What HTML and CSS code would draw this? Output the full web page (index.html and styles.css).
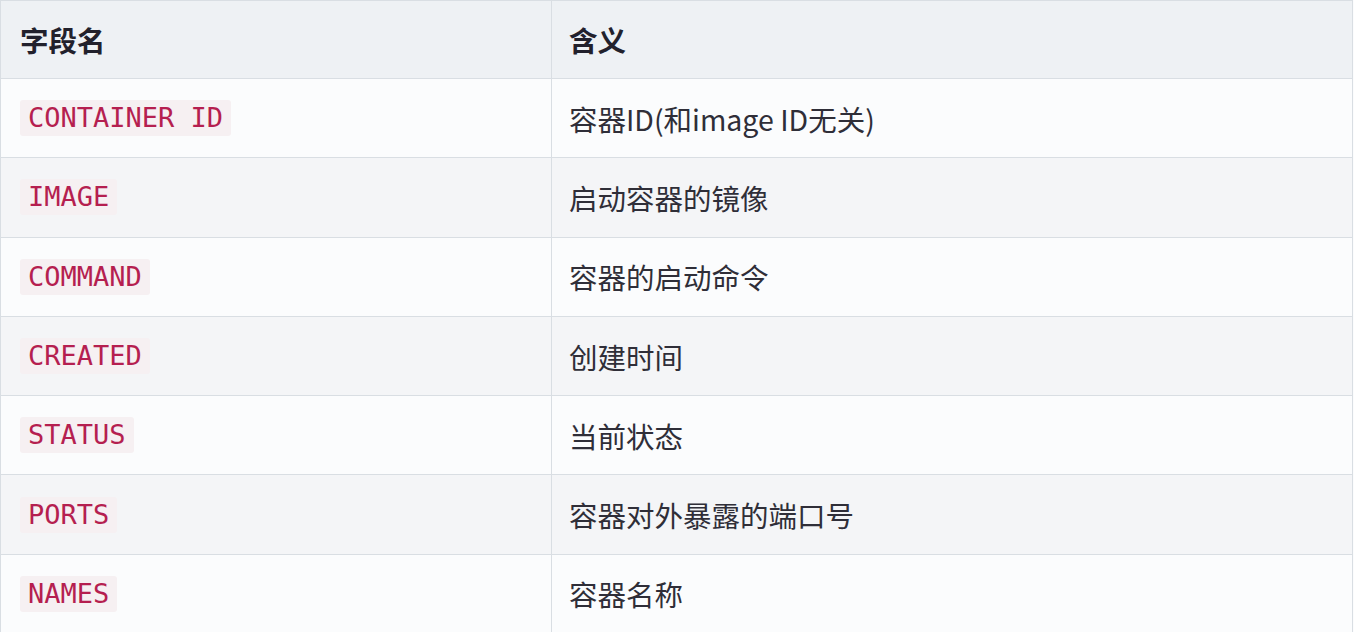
FILE: index.html
```html
<!DOCTYPE html>
<html lang="zh-CN">
<head>
<meta charset="utf-8">
<title>字段名</title>
<link rel="stylesheet" href="styles.css">
</head>
<body>
<table class="tbl">
  <thead>
    <tr><th class="c1">字段名</th><th class="c2">含义</th></tr>
  </thead>
  <tbody>
    <tr><td class="c1"><code>CONTAINER ID</code></td><td class="c2">容器ID(和image ID无关)</td></tr>
    <tr><td class="c1"><code>IMAGE</code></td><td class="c2">启动容器的镜像</td></tr>
    <tr><td class="c1"><code>COMMAND</code></td><td class="c2">容器的启动命令</td></tr>
    <tr><td class="c1"><code>CREATED</code></td><td class="c2">创建时间</td></tr>
    <tr><td class="c1"><code>STATUS</code></td><td class="c2">当前状态</td></tr>
    <tr><td class="c1"><code>PORTS</code></td><td class="c2">容器对外暴露的端口号</td></tr>
    <tr><td class="c1"><code>NAMES</code></td><td class="c2">容器名称</td></tr>
  </tbody>
</table>
</body>
</html>
```
FILE: styles.css
```css
html, body {
  margin: 0;
  padding: 0;
  background: #fbfcfd;
}
body {
  font-family: "Noto Sans CJK SC", "Noto Sans", sans-serif;
  color: #2f2e38;
  overflow: hidden;
}
.tbl {
  border-collapse: collapse;
  width: 1353px;
  table-layout: fixed;
}
.tbl th, .tbl td {
  border: 1px solid #d9dee3;
  text-align: left;
  vertical-align: middle;
  font-size: 28.5px;
  font-weight: 400;
  height: 79.3px;
  padding: 0 18px 0 17px;
  box-sizing: border-box;
}
.tbl .c1 { width: 551px; padding-left: 19px; }
.tbl td.c1 { line-height: 1; }
.tbl th {
  background: #eef1f4;
  font-weight: 700;
  color: #22212c;
  height: 78px;
}
.tbl tbody tr:nth-child(odd) td { background: #fbfcfd; }
.tbl tbody tr:nth-child(even) td { background: #f4f5f7; }
.tbl code {
  font-family: "DejaVu Sans Mono", "Liberation Mono", monospace;
  font-size: 27px;
  color: #b51f50;
  background: #f6f0f2;
  padding: 3px 8px;
  border-radius: 3px;
  display: inline-block;
  vertical-align: top;
  line-height: 30px;
}
```
